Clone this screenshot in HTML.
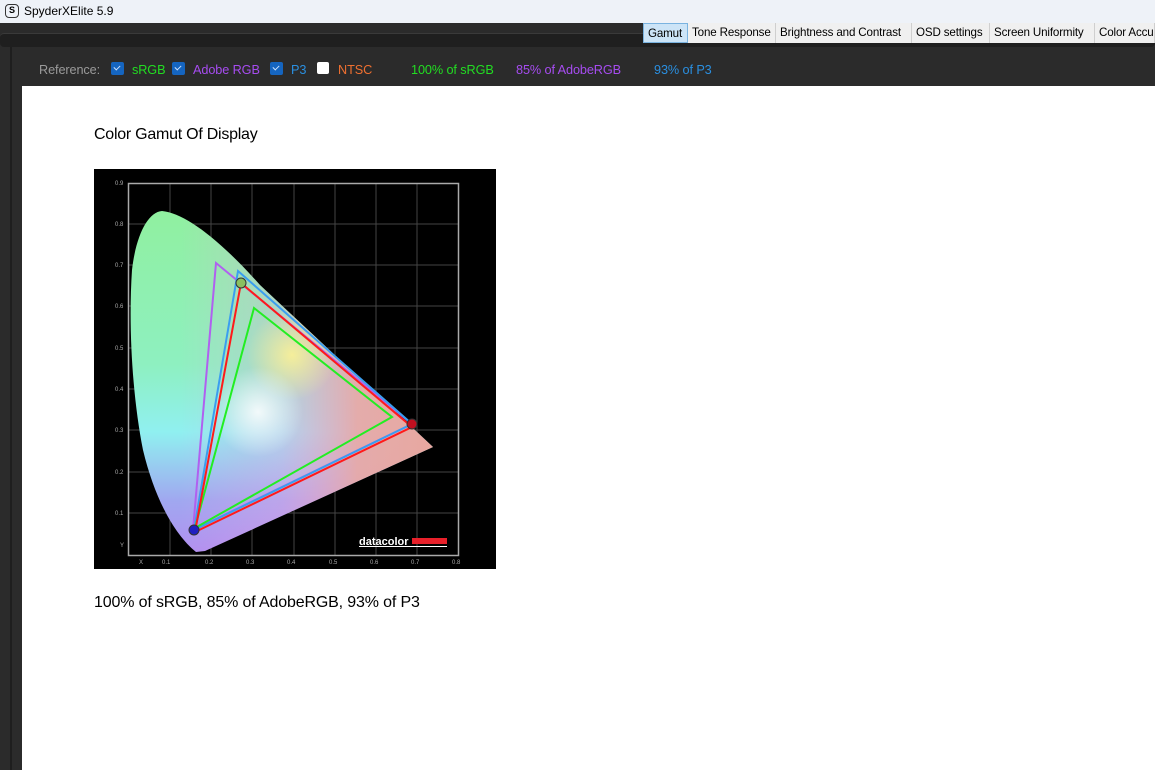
<!DOCTYPE html>
<html><head><meta charset="utf-8"><style>
*{margin:0;padding:0;box-sizing:border-box}
body{width:1155px;height:770px;overflow:hidden;background:#2b2b2b;font-family:"Liberation Sans",sans-serif;position:relative}
.abs{position:absolute}
.title{left:0;top:0;width:1155px;height:23px;background:#eef2f8;font-size:12px;color:#000}
.tabs{top:23px;left:643px;height:20px;display:flex;font-size:11.6px;letter-spacing:-0.15px;background:#f0f0f0}
.tabs div{padding:3px 0 0 4px;border-right:1px solid #cfcfcf;height:20px;color:#000;white-space:nowrap;overflow:hidden}
.tabs .on{background:#cce4f7;border:1px solid #7ab3e0}
.cb{width:13px;height:13px;border-radius:2px;background:#1565c0;top:62px}
.cb::after{content:"";position:absolute;left:3px;top:3px;width:5px;height:3px;border-left:1.5px solid #cfe3ff;border-bottom:1.5px solid #cfe3ff;transform:rotate(-45deg)}
.lab{top:63px;font-size:12.7px;letter-spacing:-0.1px}
</style></head><body>
<div class="abs title"><div class="abs" style="left:5px;top:4px;width:14px;height:14px;border:1.5px solid #333;border-radius:4px;font-size:9px;font-weight:bold;text-align:center;line-height:11px">S</div><span class="abs" style="left:24px;top:4px">SpyderXElite 5.9</span></div>
<div class="abs" style="left:0;top:33px;width:1155px;height:14px;background:#1f1f1f;border-radius:4px;border-top:1px solid #3a3a3a"></div>
<div class="abs" style="left:10px;top:47px;width:2px;height:723px;background:#1e1e1e"></div>
<div class="abs tabs"><div class="on" style="width:45px">Gamut</div><div style="width:88px">Tone Response</div><div style="width:136px">Brightness and Contrast</div><div style="width:78px">OSD settings</div><div style="width:105px">Screen Uniformity</div><div style="width:60px">Color Accuracy</div></div>
<span class="abs lab" style="left:39px;color:#9a9a9a">Reference:</span>
<div class="abs cb" style="left:111px"></div><span class="abs lab" style="left:132px;color:#22dd22">sRGB</span>
<div class="abs cb" style="left:172px"></div><span class="abs lab" style="left:193px;color:#a64cf0">Adobe RGB</span>
<div class="abs cb" style="left:270px"></div><span class="abs lab" style="left:291px;color:#2a8fe0">P3</span>
<div class="abs" style="left:317px;top:62px;width:12px;height:12px;background:#fff;border-radius:2px"></div><span class="abs lab" style="left:338px;color:#f07030">NTSC</span>
<span class="abs lab" style="left:411px;color:#22dd22">100% of sRGB</span>
<span class="abs lab" style="left:516px;color:#a64cf0">85% of AdobeRGB</span>
<span class="abs lab" style="left:654px;color:#2a8fe0">93% of P3</span>
<div class="abs" style="left:22px;top:86px;width:1133px;height:684px;background:#fff"></div>
<div class="abs" style="left:94px;top:126px;font-size:16px;letter-spacing:-0.25px;color:#000">Color Gamut Of Display</div>
<div class="abs" style="left:94px;top:594px;font-size:16px;letter-spacing:-0.15px;color:#000">100% of sRGB, 85% of AdobeRGB, 93% of P3</div>
<svg class="abs" style="left:0;top:0" width="1155" height="770">
<defs>
<linearGradient id="v" x1="0" y1="211" x2="0" y2="551" gradientUnits="userSpaceOnUse">
<stop offset="0" stop-color="#90f0a0"/><stop offset="0.45" stop-color="#8ef0c0"/><stop offset="0.65" stop-color="#90f0f0"/><stop offset="0.85" stop-color="#a0a8f0"/><stop offset="1" stop-color="#b090f0"/></linearGradient>
<linearGradient id="h" x1="180" y1="0" x2="433" y2="0" gradientUnits="userSpaceOnUse">
<stop offset="0" stop-color="#f0a0e0" stop-opacity="0"/><stop offset="0.4" stop-color="#f0a0e0" stop-opacity="0.35"/><stop offset="0.7" stop-color="#e8a8a8" stop-opacity="0.95"/><stop offset="1" stop-color="#e8a8a0"/></linearGradient>
<radialGradient id="w" cx="258" cy="412" r="45" gradientUnits="userSpaceOnUse"><stop offset="0" stop-color="#fff" stop-opacity="0.85"/><stop offset="1" stop-color="#fff" stop-opacity="0"/></radialGradient>
<radialGradient id="y" cx="292" cy="355" r="45" gradientUnits="userSpaceOnUse"><stop offset="0" stop-color="#f8f098" stop-opacity="0.95"/><stop offset="1" stop-color="#f8f098" stop-opacity="0"/></radialGradient>
</defs>
<rect x="94" y="169" width="402" height="400" fill="#000"/>
<g stroke="#444" stroke-width="1">
<line x1="170" y1="183" x2="170" y2="555"/><line x1="211" y1="183" x2="211" y2="555"/><line x1="252" y1="183" x2="252" y2="555"/><line x1="294" y1="183" x2="294" y2="555"/><line x1="335" y1="183" x2="335" y2="555"/><line x1="376" y1="183" x2="376" y2="555"/><line x1="417" y1="183" x2="417" y2="555"/>
<line x1="128" y1="224" x2="458" y2="224"/><line x1="128" y1="265" x2="458" y2="265"/><line x1="128" y1="306" x2="458" y2="306"/><line x1="128" y1="348" x2="458" y2="348"/><line x1="128" y1="389" x2="458" y2="389"/><line x1="128" y1="430" x2="458" y2="430"/><line x1="128" y1="472" x2="458" y2="472"/><line x1="128" y1="513" x2="458" y2="513"/>
</g>
<rect x="128.5" y="183.5" width="330" height="372" fill="none" stroke="#aaa" stroke-width="1.5"/>
<g fill="#aaa" font-size="6" font-family="Liberation Sans">
<text x="115" y="185">0.9</text><text x="115" y="226">0.8</text><text x="115" y="267">0.7</text><text x="115" y="308">0.6</text><text x="115" y="350">0.5</text><text x="115" y="391">0.4</text><text x="115" y="432">0.3</text><text x="115" y="474">0.2</text><text x="115" y="515">0.1</text><text x="120" y="547">Y</text>
<text x="139" y="564">X</text><text x="162" y="564">0.1</text><text x="205" y="564">0.2</text><text x="246" y="564">0.3</text><text x="287" y="564">0.4</text><text x="329" y="564">0.5</text><text x="370" y="564">0.6</text><text x="411" y="564">0.7</text><text x="452" y="564">0.8</text>
</g>
<g>
<path d="M196 552 C175 535 155 500 143 450 C133 400 128 330 132 270 C136 235 148 212 162 211 C185 213 220 240 260 285 L433 447 L205 551 Z" fill="url(#v)"/>
<path d="M196 552 C175 535 155 500 143 450 C133 400 128 330 132 270 C136 235 148 212 162 211 C185 213 220 240 260 285 L433 447 L205 551 Z" fill="url(#h)"/>
<path d="M196 552 C175 535 155 500 143 450 C133 400 128 330 132 270 C136 235 148 212 162 211 C185 213 220 240 260 285 L433 447 L205 551 Z" fill="url(#y)"/>
<path d="M196 552 C175 535 155 500 143 450 C133 400 128 330 132 270 C136 235 148 212 162 211 C185 213 220 240 260 285 L433 447 L205 551 Z" fill="url(#w)"/>
</g>
<g fill="none" stroke-width="2">
<path d="M216 263 L412 424 L193 530 Z" stroke="#b060f0"/>
<path d="M238 271 L412 424 L194 530 Z" stroke="#3a9ef0"/>
<path d="M254 308 L392 417 L195 528 Z" stroke="#22ee22"/>
<path d="M241 283 L412 427 L195 532 Z" stroke="#ff1a1a"/>
</g>
<circle cx="241" cy="283" r="5" fill="#8ac060" stroke="#333"/>
<circle cx="412" cy="424" r="5" fill="#c01020" stroke="#333"/>
<circle cx="194" cy="530" r="5" fill="#2020c0" stroke="#333"/>
<text x="359" y="545" fill="#fff" font-size="11" font-weight="bold" font-family="Liberation Sans">datacolor</text>
<rect x="412" y="538" width="35" height="6" fill="#e8202a"/>
<rect x="359" y="546" width="88" height="1" fill="#fff"/>
</svg>
</body></html>
